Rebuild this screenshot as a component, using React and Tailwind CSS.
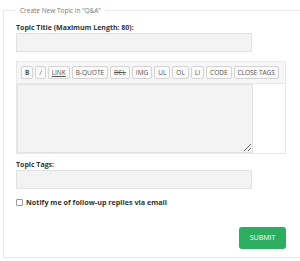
export default function App() {
  const btn = "h-[13px] px-[3px] border border-[#d4d4d4] rounded-[2px] bg-[#fafafa] text-[6.5px] leading-[11px] text-[#555] flex items-center whitespace-nowrap";
  return (
    <div className="w-[300px] h-[261px] bg-white pt-[5px] px-[3px]" style={{ fontFamily: '"Open Sans", sans-serif' }}>
      <fieldset className="border border-[#e8e8e8] h-[253px] pl-[12px] pr-[15px]">
        <legend className="px-[4px] text-[6.5px] leading-[11px] text-[#777]">Create New Topic in “Q&amp;A”</legend>
        <div className="mt-[7px] text-[7px] leading-[9px] font-bold text-[#333]">Topic Title (Maximum Length: 80):</div>
        <div className="mt-[1px] w-[236px] h-[19px] bg-[#f3f3f3] border border-[#e2e2e2]"></div>
        <div className="mt-[9px] w-[270px] border border-[#e8e8e8]">
          <div className="h-[22px] bg-[#f6f6f6] border-b border-[#e8e8e8] flex items-center gap-[2px] px-[4px]">
            <span className={btn + " font-bold"}>B</span>
            <span className={btn + " italic"}>/</span>
            <span className={btn + " underline"}>LINK</span>
            <span className={btn}>B-QUOTE</span>
            <span className={btn + " line-through"}>DEL</span>
            <span className={btn}>IMG</span>
            <span className={btn}>UL</span>
            <span className={btn}>OL</span>
            <span className={btn}>LI</span>
            <span className={btn}>CODE</span>
            <span className={btn}>CLOSE TAGS</span>
          </div>
          <textarea className="block w-[236px] h-[69px] bg-[#f3f3f3] border border-[#e2e2e2] resize-y outline-none"></textarea>
        </div>
        <div className="mt-[6px] text-[7px] leading-[9px] font-bold text-[#333]">Topic Tags:</div>
        <div className="mt-[1px] w-[236px] h-[19px] bg-[#f3f3f3] border border-[#e2e2e2]"></div>
        <div className="mt-[8px] flex items-center gap-[3px] h-[11px]">
          <span className="w-[7px] h-[7px] border border-[#999] rounded-[1px] bg-white"></span>
          <span className="text-[7.2px] leading-[11px] font-bold text-[#333]">Notify me of follow-up replies via email</span>
        </div>
        <div className="mt-[19px] flex justify-end">
          <button className="w-[47px] h-[22px] rounded-[3px] bg-[#2cad5f] text-white text-[7px]">SUBMIT</button>
        </div>
      </fieldset>
    </div>
  );
}
